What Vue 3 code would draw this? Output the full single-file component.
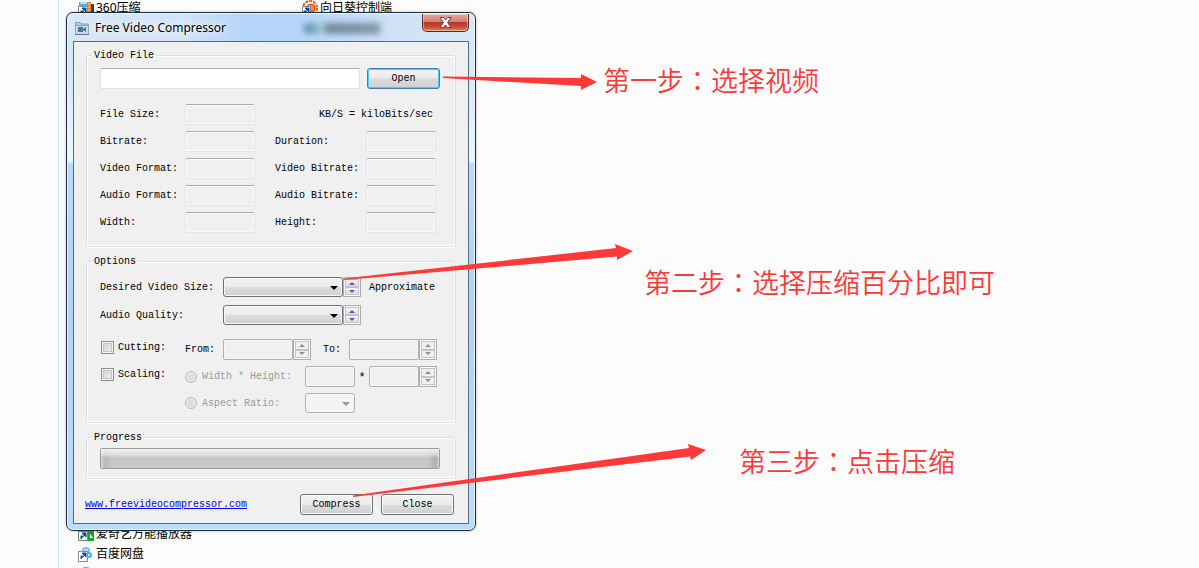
<script setup>
const infoRows = [
  [{ id: 'bitrate', text: 'Bitrate:' }, { id: 'duration', text: 'Duration:' }],
  [{ id: 'vformat', text: 'Video Format:' }, { id: 'vbitrate', text: 'Video Bitrate:' }],
  [{ id: 'aformat', text: 'Audio Format:' }, { id: 'abitrate', text: 'Audio Bitrate:' }],
  [{ id: 'width', text: 'Width:' }, { id: 'height', text: 'Height:' }],
]
const combos = [
  { id: 'size', text: 'Desired Video Size:', note: 'Approximate' },
  { id: 'quality', text: 'Audio Quality:', note: '' },
]
const steps = [
  { head: '第一步', tail: '选择视频', cls: 'one' },
  { head: '第二步', tail: '选择压缩百分比即可', cls: 'two' },
  { head: '第三步', tail: '点击压缩', cls: 'three' },
]
</script>

<template>
  <main class="desktop">
    <div class="shortcut zip">
      <svg width="16" height="16" viewBox="0 0 16 16">
        <rect x="1" y="2" width="10" height="14" fill="#4cb4ee" />
        <rect x="2" y="2" width="8" height="2" fill="#a8dcf6" />
        <rect x="9" y="2" width="4" height="14" fill="#e0862c" />
        <rect x="13" y="4" width="3" height="12" fill="#5a3a22" />
        <path d="M10 4h2M10 7h2M10 10h2" stroke="#ffe2a0" />
        <rect x="0.500" y="6.500" width="9" height="10" fill="#fff" stroke="#8c8c8c" />
        <path d="M3 14V11H6M4 8h4v4z" fill="#12469b" stroke="#12469b" />
      </svg>
      <span>360压缩</span>
    </div>
    <div class="shortcut flower">
      <svg width="16" height="16" viewBox="0 0 16 16">
        <circle cx="8" cy="8" r="7" fill="#fff" stroke="#ef5a1c" stroke-width="2" stroke-dasharray="3 1" />
        <circle cx="9" cy="8" r="4" fill="#f78a3c" stroke="#d9480f" />
        <rect x="0.500" y="6.500" width="8" height="9" fill="#fff" stroke="#8c8c8c" />
        <path d="M2 13V11H5M3 8h4v4z" fill="#12469b" stroke="#12469b" />
      </svg>
      <span>向日葵控制端</span>
    </div>
    <div class="shortcut player">
      <svg width="16" height="16" viewBox="0 0 16 16">
        <rect x="1" y="0" width="15" height="15" fill="#1ca32c" />
        <path d="M12 8l3 4h-3z" fill="#fff" />
        <rect x="0.500" y="5.500" width="9" height="9" fill="#e9f8ea" stroke="#7a8a7a" />
        <path d="M3 13V10H6M4 7h4v4z" fill="#12469b" stroke="#12469b" />
      </svg>
      <span>爱奇艺万能播放器</span>
    </div>
    <div class="shortcut disk">
      <svg width="16" height="16" viewBox="0 0 16 16">
        <circle cx="8" cy="5" r="3" fill="none" stroke="#6cc6f4" stroke-width="2" />
        <circle cx="11" cy="9" r="2" fill="none" stroke="#39b5f2" stroke-width="2" />
        <circle cx="8" cy="5" r="1" fill="#f2606a" />
        <rect x="0.500" y="5.500" width="9" height="10" fill="#fff" stroke="#8c8c8c" />
        <path d="M3 13V10H6M4 7h4v4z" fill="#12469b" stroke="#12469b" />
      </svg>
      <span>百度网盘</span>
    </div>
    <div class="shortcut next">
      <svg width="16" height="16" viewBox="0 0 16 16"><circle cx="8" cy="8" r="8" fill="#4aa8e0" /></svg>
    </div>

    <section class="window" aria-label="Free Video Compressor">
      <header class="titlebar">
        <span class="ghost"></span>
        <svg class="appicon" width="16" height="16" viewBox="0 0 16 16">
          <path d="M1.500 14V2.500H6L7 4h7.500v10z" fill="#b4c8dc" stroke="#8aa2ba" />
          <rect x="2" y="5" width="12" height="9" fill="#c7dcf0" />
          <path d="M2 5.500h12" stroke="#8aa2ba" />
          <path d="M1 14.500h14" stroke="#5f7a96" />
          <path d="M4 7h5v5H4zM9 9l3-2v5l-3-2z" fill="#54718f" />
        </svg>
        <h1>Free Video Compressor</h1>
        <button class="close" type="button" aria-label="Close window">
          <svg width="13" height="11" viewBox="0 0 13 11">
            <path d="M1 0.500h3.500L6.500 3l2-2.500H12L8.500 5.500l3.500 5H8.500l-2-2.500-2 2.500H1l3.500-5z" fill="#fff" stroke="#5b4646" />
          </svg>
        </button>
      </header>

      <form class="client" @submit.prevent>
        <fieldset class="video">
          <legend>Video File</legend>
          <div class="row filerow">
            <input class="path" type="text" aria-label="Video file" />
            <button class="btn focus" type="button">Open</button>
          </div>
          <div class="info">
            <label for="fsize">File Size:</label>
            <input id="fsize" class="box" type="text" readonly />
            <span class="unit">KB/S = kiloBits/sec</span>
            <template v-for="row in infoRows" :key="row[0].id">
              <template v-for="f in row" :key="f.id">
                <label :for="f.id">{{ f.text }}</label>
                <input :id="f.id" class="box" type="text" readonly />
              </template>
            </template>
          </div>
        </fieldset>

        <fieldset class="options">
          <legend>Options</legend>
          <div class="combos">
            <div v-for="c in combos" :key="c.id" class="row">
              <label class="wide" :for="c.id">{{ c.text }}</label>
              <span class="drop big"><select :id="c.id"></select></span>
              <span class="spin">
                <button type="button" :aria-label="'Increase ' + c.id"><i class="up"></i></button>
                <button type="button" :aria-label="'Decrease ' + c.id"><i class="down"></i></button>
              </span>
              <span class="note">{{ c.note }}</span>
            </div>
          </div>
          <div class="edits">
            <div class="row">
              <label class="tick"><input type="checkbox" />Cutting:</label>
              <label class="from" for="from">From:</label>
              <input id="from" class="flat" type="text" disabled />
              <span class="spin off">
                <button type="button" disabled aria-label="Increase start"><i class="up"></i></button>
                <button type="button" disabled aria-label="Decrease start"><i class="down"></i></button>
              </span>
              <label class="to" for="to">To:</label>
              <input id="to" class="flat" type="text" disabled />
              <span class="spin off">
                <button type="button" disabled aria-label="Increase end"><i class="up"></i></button>
                <button type="button" disabled aria-label="Decrease end"><i class="down"></i></button>
              </span>
            </div>
            <div class="row">
              <label class="tick"><input type="checkbox" />Scaling:</label>
              <label class="radio"><input type="radio" name="scale" disabled />Width * Height:</label>
              <input class="flat small" type="text" disabled aria-label="Scaled width" />
              <span class="star">*</span>
              <input class="flat small" type="text" disabled aria-label="Scaled height" />
              <span class="spin off">
                <button type="button" disabled aria-label="Increase scale"><i class="up"></i></button>
                <button type="button" disabled aria-label="Decrease scale"><i class="down"></i></button>
              </span>
            </div>
            <div class="row">
              <span class="tick"></span>
              <label class="radio"><input type="radio" name="scale" disabled />Aspect Ratio:</label>
              <span class="drop off"><select disabled aria-label="Aspect ratio"></select></span>
            </div>
          </div>
        </fieldset>

        <fieldset class="progress">
          <legend>Progress</legend>
          <progress value="0" max="100" aria-label="Progress"></progress>
        </fieldset>

        <footer class="row">
          <a href="#">www.freevideocompressor.com</a>
          <button class="btn" type="button">Compress</button>
          <button class="btn" type="button">Close</button>
        </footer>
      </form>
    </section>

    <svg class="arrows" width="720" height="520" viewBox="0 0 720 520" fill="#fd3838">
      <path d="M443 76.500L581 78V74L597 82L581 90V86L443 78Z" />
      <path d="M344 278.500L616 248L615 244L633 251L617 260V256.500L344 280Z" />
      <path d="M353 495.500L689 448L688 444L706 450L691 460L690 456.500L353 497Z" />
    </svg>
    <p v-for="s in steps" :key="s.cls" class="step" :class="s.cls">{{ s.head }}<span class="colon">：</span>{{ s.tail }}</p>
  </main>
</template>

<style>
body { background: #fcfcfc; }
</style>

<style scoped>
* { box-sizing: border-box; }
.desktop {
  position: relative;
  height: 100vh;
  overflow: hidden;
  background: linear-gradient(90deg, #fcfcfc 58px, #d6e5f5 58px, #d6e5f5 59px, #fcfcfc 59px);
  font-family: "Liberation Mono", "Noto Sans CJK SC", monospace;
  font-size: 10px;
  line-height: 13px;
  color: #000;
}
.shortcut {
  position: absolute;
  left: 78px;
  display: flex;
  align-items: center;
  gap: 2px;
  font: 12px/16px "Noto Sans", "Noto Sans CJK SC", sans-serif;
  white-space: nowrap;
}
.zip { top: 0; }
.flower { left: 302px; top: 0; }
.player { top: 526px; }
.disk { top: 546px; }
.next { top: 567px; }

.window {
  position: absolute;
  left: 66px;
  top: 12px;
  width: 410px;
  padding: 0 6px 6px;
  border: 1px solid #1f2a38;
  border-radius: 7px;
  background:
    linear-gradient(180deg, #d3e4f7 0, #d9e9f9 70px, #eef6fd 149px, #b9dafb 150px, #b0d2f5 300px, #bbdcfd 100%);
  box-shadow: inset 0 0 0 1px #eef6fe, 0 0 3px rgba(0, 0, 0, 0.25);
}
.titlebar {
  position: relative;
  display: flex;
  align-items: center;
  height: 28px;
  margin: 0 -5px;
  padding: 0 0 0 6px;
  border-top: 1px solid #eef6fe;
  border-radius: 6px 6px 0 0;
  background: linear-gradient(90deg, #d9e7f6 0, #d3e4f7 110px, #b3d4f8 180px, #b6d6f9 230px, #cfe2f7 330px, #d8e8f8 100%);
}
.ghost {
  position: absolute;
  left: 236px;
  top: 9px;
  width: 76px;
  height: 11px;
  background: linear-gradient(90deg, #4c6fae 0, #6fa99a 14px, transparent 18px, #5c6c7c 22px, #6b7b8b 100%);
  filter: blur(3px);
  opacity: 0.75;
}
h1 {
  flex: 1;
  margin: 0 0 0 5px;
  font: 12px/16px "Noto Sans", sans-serif;
  text-shadow: 0 0 6px #fff, 0 0 8px #fff;
}
.close {
  align-self: flex-start;
  display: flex;
  align-items: center;
  justify-content: center;
  width: 47px;
  height: 18px;
  margin-right: 5px;
  padding: 0;
  border: 1px solid #5a2a2a;
  border-top: 0;
  border-radius: 0 0 5px 5px;
  background: linear-gradient(180deg, #e3a89e 0, #d38072 45%, #b93a27 50%, #c84a30 75%, #e08a68 100%);
  box-shadow: inset 0 0 0 1px rgba(255, 255, 255, 0.4);
}
.client {
  padding: 7px 12px 8px;
  border: 1px solid #566a80;
  background: #f0f0f0;
}
fieldset {
  min-width: 0;
  margin: 0 0 8px;
  padding: 6px 15px 13px 13px;
  border: 1px solid #d5dfe8;
  border-radius: 3px;
  box-shadow: inset 0 0 0 1px #fff, 0 1px 0 #fff;
}
legend {
  margin-left: -8px;
  padding: 0 2px;
  background: #f0f0f0;
}
.options { padding-top: 9px; padding-bottom: 9px; }
.progress { padding-top: 4px; padding-bottom: 9px; margin-bottom: 15px; }
.row { display: flex; align-items: center; }
input, select, button {
  margin: 0;
  font: inherit;
  color: inherit;
}
.filerow { gap: 7px; }
.path {
  flex: 1;
  min-width: 0;
  height: 21px;
  border: 1px solid #e2e3ea;
  border-top-color: #abadb3;
  border-radius: 1px;
  background: #fff;
}
.btn {
  width: 73px;
  height: 21px;
  padding: 0;
  border: 1px solid #707070;
  border-radius: 3px;
  background: linear-gradient(180deg, #f3f3f3 0, #ebebeb 50%, #dddddd 50%, #cfcfcf 100%);
  box-shadow: inset 0 0 0 1px #fbfbfb;
}
.focus { border-color: #3c7fb1; box-shadow: inset 0 0 0 1px #46d0f7; }
.info {
  display: grid;
  grid-template-columns: 85px 70px 111px 70px;
  row-gap: 6px;
  align-items: center;
  margin-top: 15px;
}
.info label:nth-of-type(odd):not(:first-child) { padding-left: 20px; }
.unit { grid-column: span 2; padding-left: 64px; white-space: nowrap; }
.box {
  width: 70px;
  height: 21px;
  border: 1px solid #e0e4ec;
  border-top-color: #abadb3;
  border-radius: 2px;
  background: #f0f0f0;
  box-shadow: inset 0 0 0 1px #fafafa;
}
.combos, .edits { display: grid; gap: 8px; }
.edits { gap: 6px; margin-top: 14px; }
.wide { width: 123px; }
.drop { position: relative; width: 50px; height: 20px; }
.big { width: 120px; }
.drop::after {
  content: "";
  position: absolute;
  right: 5px;
  top: 9px;
  border: 4px solid transparent;
  border-top-color: #000;
  border-bottom: 0;
}
select {
  display: block;
  width: 100%;
  height: 20px;
  appearance: none;
  border: 1px solid #707070;
  border-radius: 3px;
  background: linear-gradient(180deg, #f2f2f2 0, #ebebeb 50%, #dddddd 50%, #cfcfcf 100%);
  box-shadow: inset 0 0 0 1px #f8f8f8;
}
.drop.off select { border-color: #adb2b5; background: #f4f4f4; opacity: 1; }
.drop.off::after { border-top-color: #989898; }
.spin {
  display: grid;
  grid-template-rows: 1fr 1fr;
  width: 18px;
  height: 20px;
  padding: 1px;
  border: 1px solid #abadb3;
  background: #fafafa;
}
.spin button {
  display: flex;
  align-items: center;
  justify-content: center;
  min-height: 0;
  padding: 0;
  border: 1px solid #c4c4c4;
  background: linear-gradient(180deg, #f6f6f6, #dedede);
}
.spin i { border: 3px solid transparent; }
.spin .up { border-top: 0; border-bottom-color: #4460b4; }
.spin .down { border-bottom: 0; border-top-color: #4460b4; }
.spin.off { height: 21px; }
.spin.off .up { border-bottom-color: #909090; }
.spin.off .down { border-top-color: #909090; }
.spin.off button { background: #f0f0f0; }
.note { padding-left: 8px; }
.tick {
  align-self: flex-start;
  display: flex;
  align-items: center;
  gap: 4px;
  width: 85px;
  padding-left: 1px;
  margin-top: 2px;
}
.tick input {
  appearance: none;
  width: 13px;
  height: 13px;
  border: 1px solid #8e8f8f;
  background: linear-gradient(135deg, #c9ced6, #f4f4f4);
  box-shadow: inset 0 0 0 1px #f4f4f4, inset 0 0 0 2px #c0c4ca;
}
.from { width: 38px; }
.to { width: 38px; padding-left: 12px; }
.flat {
  width: 70px;
  height: 21px;
  border: 1px solid #afafaf;
  border-radius: 2px;
  background: #f0f0f0;
  box-shadow: inset 0 0 0 1px #f8f8f8;
}
.small { width: 50px; }
.star { width: 14px; padding-top: 4px; text-align: center; font-size: 12px; }
.radio {
  display: flex;
  align-items: center;
  gap: 5px;
  width: 120px;
  color: #9a9a9a;
  white-space: nowrap;
}
.radio input {
  appearance: none;
  width: 12px;
  height: 12px;
  border: 1px solid #b8b8b8;
  border-radius: 50%;
  background: radial-gradient(#dcdcdc 2px, #ececec 5px);
}
progress {
  display: block;
  appearance: none;
  width: 100%;
  height: 21px;
  border: 1px solid #9c9c9c;
  border-radius: 2px;
  background: transparent;
}
progress::-webkit-progress-bar {
  background:
    linear-gradient(180deg, rgba(255, 255, 255, 0.8) 0, rgba(255, 255, 255, 0.3) 7px, transparent 8px),
    linear-gradient(90deg, #d4d4d4 0, #b9b9b9 4px, #c8c8c8 12px, #c8c8c8 calc(100% - 12px), #b0b0b0 calc(100% - 3px), #d4d4d4 100%);
}
footer { gap: 8px; padding-right: 2px; }
a {
  flex: 1;
  margin-left: -1px;
  color: #0000f0;
  text-decoration: underline;
}
.arrows { position: absolute; left: 0; top: 0; pointer-events: none; }
.step {
  position: absolute;
  margin: 0;
  color: #fd3838;
  font: 350 27px/36px "Noto Sans CJK SC", sans-serif;
  white-space: nowrap;
}
.colon { font-family: "Noto Sans CJK TC", sans-serif; }
.one { left: 603px; top: 62px; }
.two { left: 644px; top: 264px; }
.three { left: 739px; top: 443px; }
</style>
